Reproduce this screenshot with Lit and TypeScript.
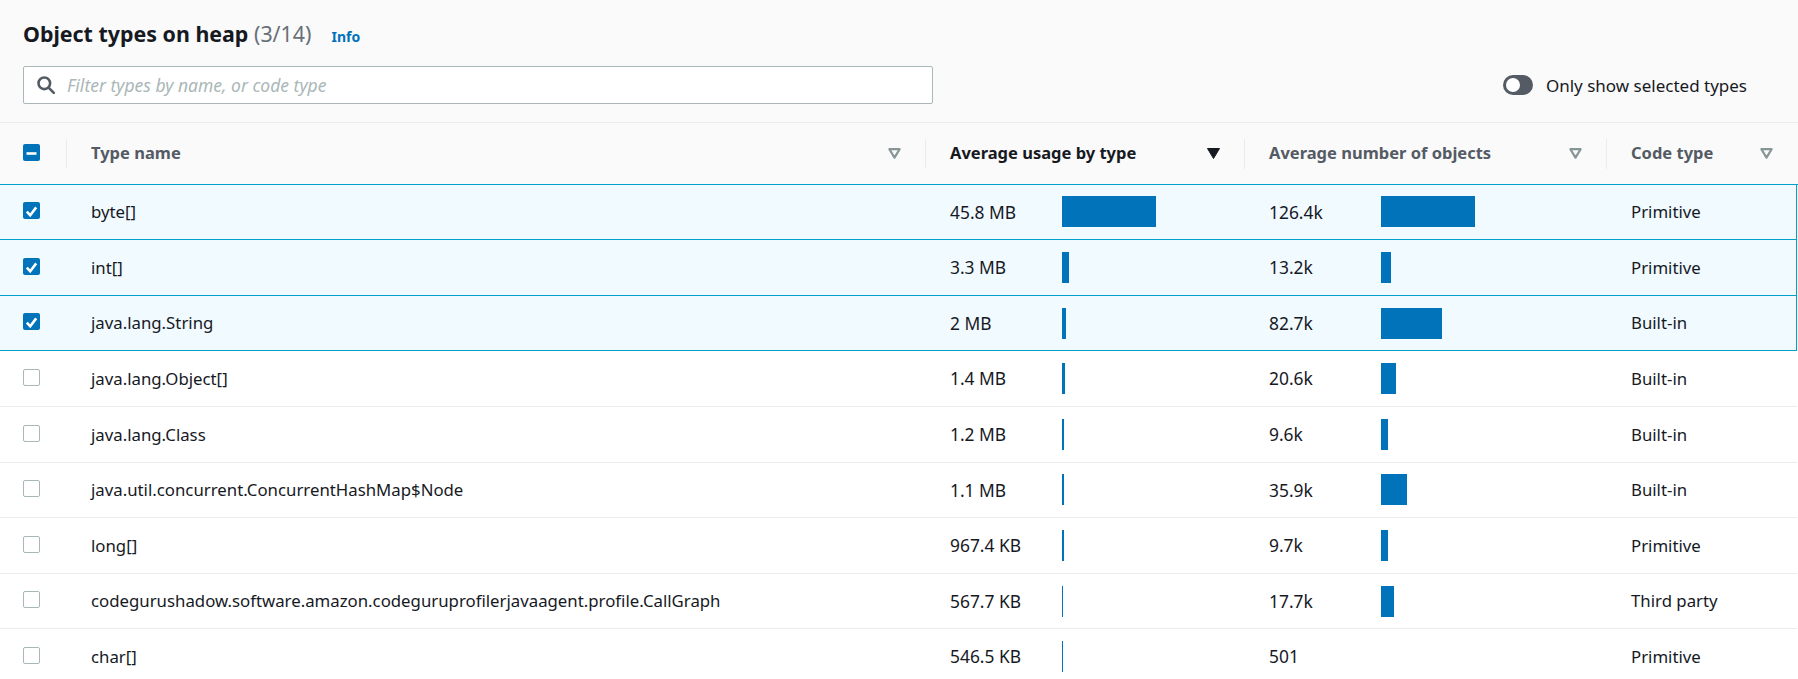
import { LitElement, html, css, svg } from 'lit';
import { customElement } from 'lit/decorators.js';

interface HeapRow {
  name: string;
  usage: string;
  usageBar: number;
  count: string;
  countBar: number;
  codeType: string;
  selected: boolean;
}

const ROWS: HeapRow[] = [
  { name: 'byte[]', usage: '45.8 MB', usageBar: 94, count: '126.4k', countBar: 94, codeType: 'Primitive', selected: true },
  { name: 'int[]', usage: '3.3 MB', usageBar: 7, count: '13.2k', countBar: 10, codeType: 'Primitive', selected: true },
  { name: 'java.lang.String', usage: '2 MB', usageBar: 4, count: '82.7k', countBar: 61, codeType: 'Built-in', selected: true },
  { name: 'java.lang.Object[]', usage: '1.4 MB', usageBar: 3, count: '20.6k', countBar: 15, codeType: 'Built-in', selected: false },
  { name: 'java.lang.Class', usage: '1.2 MB', usageBar: 2, count: '9.6k', countBar: 7, codeType: 'Built-in', selected: false },
  { name: 'java.util.concurrent.ConcurrentHashMap$Node', usage: '1.1 MB', usageBar: 2, count: '35.9k', countBar: 26, codeType: 'Built-in', selected: false },
  { name: 'long[]', usage: '967.4 KB', usageBar: 2, count: '9.7k', countBar: 7, codeType: 'Primitive', selected: false },
  { name: 'codegurushadow.software.amazon.codeguruprofilerjavaagent.profile.CallGraph', usage: '567.7 KB', usageBar: 1, count: '17.7k', countBar: 13, codeType: 'Third party', selected: false },
  { name: 'char[]', usage: '546.5 KB', usageBar: 1, count: '501', countBar: 0, codeType: 'Primitive', selected: false },
];

const searchIcon = svg`<svg viewBox="0 0 18 18" width="18" height="18" fill="none" stroke="#545b64" stroke-width="2.6"><circle cx="7.3" cy="7.3" r="5.8"></circle><path d="M11.6 11.6 L16.8 16.8" stroke-linecap="round"></path></svg>`;
const sortIcon = svg`<svg viewBox="0 0 13 11" width="13" height="11"><path d="M1.4 1.2 H11.6 L6.5 9.6 Z" fill="none" stroke="#879596" stroke-width="2.2" stroke-linejoin="round"></path></svg>`;
const sortedIcon = svg`<svg viewBox="0 0 13 11" width="13" height="11"><path d="M.5 .5 H12.5 L6.5 10.5 Z" fill="#16191f" stroke="#16191f" stroke-linejoin="round"></path></svg>`;
const checkMark = svg`<svg viewBox="0 0 17 17" width="17" height="17"><path d="M3.8 8.6 L7.2 12.2 L13.2 4.4" fill="none" stroke="#fff" stroke-width="2.6"></path></svg>`;
const dashMark = svg`<svg viewBox="0 0 17 17" width="17" height="17"><path d="M3.5 8.5 H13.5" fill="none" stroke="#fff" stroke-width="2.6"></path></svg>`;

@customElement('app-root')
export class AppRoot extends LitElement {
  static styles = css`
    :host {
      display: block;
      height: 679px;
      overflow: hidden;
      background: #fff;
      color: #16191f;
      font-family: 'Noto Sans', sans-serif;
      font-size: 16.8px;
    }

    .top {
      height: 123px;
      box-sizing: border-box;
      padding: 20px 51px 0 23px;
      background: #fafafa;
      border-bottom: 1px solid #eaeded;
    }

    .title-row {
      display: flex;
      align-items: baseline;
      height: 28px;
      margin-bottom: 18px;
    }

    h2 {
      margin: 0;
      font-size: 21.4px;
      line-height: 28px;
      font-weight: 700;
    }

    .total {
      font-weight: 400;
      color: #687078;
    }

    .info {
      margin-left: 20px;
      font-size: 14px;
      font-weight: 700;
      color: #0073bb;
    }

    .filter-row {
      display: flex;
      justify-content: space-between;
      align-items: center;
    }

    .search {
      display: flex;
      align-items: center;
      gap: 12px;
      width: 910px;
      height: 38px;
      box-sizing: border-box;
      padding-left: 13px;
      background: #fff;
      border: 1px solid #aab7b8;
      border-radius: 2px;
      color: #aab7b8;
      font-size: 17.5px;
      font-style: italic;
    }

    .toggle-wrap {
      display: flex;
      align-items: center;
      gap: 13px;
      font-size: 17px;
    }

    .toggle {
      display: block;
      width: 30px;
      height: 20px;
      box-sizing: border-box;
      padding: 3px;
      border-radius: 10px;
      background: #545b64;
    }

    .knob {
      display: block;
      width: 14px;
      height: 14px;
      border-radius: 50%;
      background: #fff;
    }

    .row {
      display: grid;
      grid-template-columns: 67px 859px 319px 362px 1fr;
      box-sizing: border-box;
      height: 55.6px;
      margin-right: 1px;
      border-bottom: 1px solid #eaeded;
    }

    .row.selected {
      background: #f1faff;
      border-bottom-color: #00a1c9;
      box-shadow: inset -1px 0 0 #00a1c9;
    }

    .row.head {
      height: 61.6px;
      margin-right: 0;
      background: #fafafa;
      border-bottom-color: #00a1c9;
      color: #545b64;
      font-size: 16.5px;
      font-weight: 700;
    }

    .cell {
      display: flex;
      align-items: center;
      min-width: 0;
      padding-left: 24px;
      white-space: nowrap;
    }

    .text {
      padding-bottom: 0.5px;
    }

    .check-cell {
      padding-left: 23px;
    }

    .box {
      display: block;
      width: 17px;
      height: 17px;
      box-sizing: border-box;
      margin-bottom: 2.5px;
      border: 1px solid #aab7b8;
      border-radius: 2px;
      background: #fff;
    }

    .box.on {
      border: 0;
      background: #0073bb;
    }

    .head .cell {
      justify-content: space-between;
      padding-right: 25px;
      position: relative;
    }

    .head .label {
      padding-bottom: 2px;
    }

    .head .cell + .cell::before {
      content: '';
      position: absolute;
      left: -1px;
      top: 16px;
      height: 30px;
      border-left: 1px solid #eaeded;
    }

    .head .sorted {
      color: #16191f;
    }

    .value {
      flex: none;
      width: 112px;
      padding-bottom: 0.5px;
      font-size: 17.4px;
    }

    .bar {
      display: block;
      height: 31px;
      background: #0073bb;
    }
  `;

  private headCell(label: string, sorted = false) {
    return html`<div class="cell ${sorted ? 'sorted' : ''}">
      <span class="label">${label}</span>${sorted ? sortedIcon : sortIcon}
    </div>`;
  }

  private metric(value: string, width: number) {
    return html`<div class="cell">
      <span class="value">${value}</span>
      ${width > 0 ? html`<span class="bar" style="width: ${width}px"></span>` : ''}
    </div>`;
  }

  render() {
    return html`
      <div class="top">
        <div class="title-row">
          <h2>Object types on heap <span class="total">(3/14)</span></h2>
          <span class="info">Info</span>
        </div>
        <div class="filter-row">
          <div class="search">${searchIcon}<span>Filter types by name, or code type</span></div>
          <div class="toggle-wrap">
            <span class="toggle"><span class="knob"></span></span>
            <span>Only show selected types</span>
          </div>
        </div>
      </div>
      <div class="row head">
        <div class="cell check-cell"><span class="box on">${dashMark}</span></div>
        ${this.headCell('Type name')}
        ${this.headCell('Average usage by type', true)}
        ${this.headCell('Average number of objects')}
        ${this.headCell('Code type')}
      </div>
      ${ROWS.map(
        (row) => html`<div class="row ${row.selected ? 'selected' : ''}">
          <div class="cell check-cell">
            <span class="box ${row.selected ? 'on' : ''}">${row.selected ? checkMark : ''}</span>
          </div>
          <div class="cell text">${row.name}</div>
          ${this.metric(row.usage, row.usageBar)}
          ${this.metric(row.count, row.countBar)}
          <div class="cell text">${row.codeType}</div>
        </div>`
      )}
    `;
  }
}
